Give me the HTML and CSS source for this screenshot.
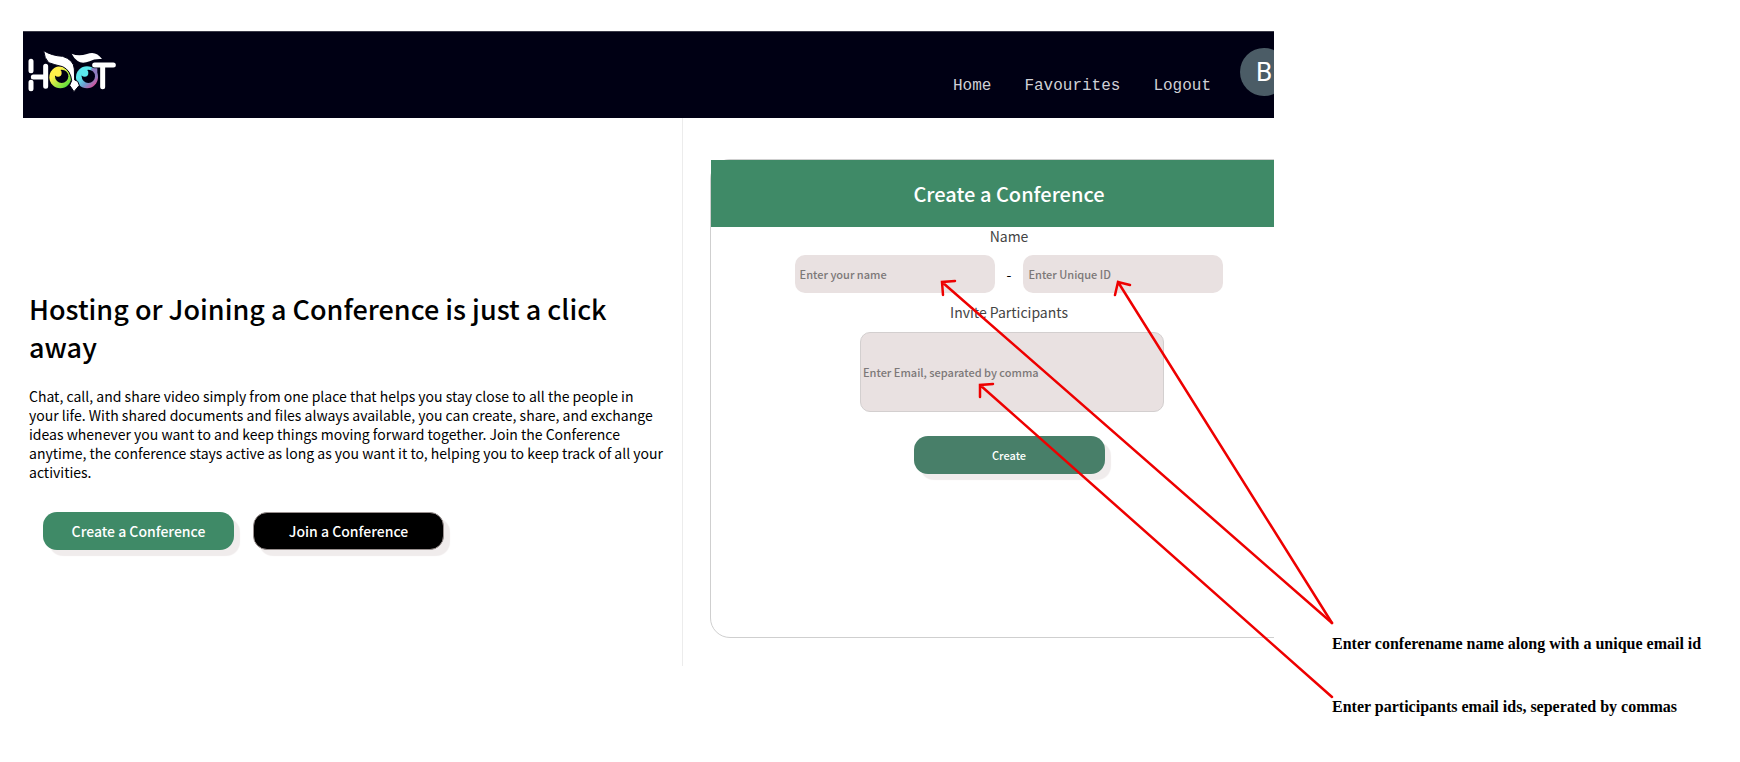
FILE: index.html
```html
<!DOCTYPE html>
<html lang="en">
<head>
<meta charset="utf-8">
<title>Hoot – Create a Conference</title>
<link rel="stylesheet" href="styles.css">
</head>
<body>
<div class="page">
  <div class="app">
    <header class="topbar">
      <svg class="logo" viewBox="51 90 270 126" role="img" aria-label="Hoot">
        <defs>
          <linearGradient id="eye-left" x1="0" y1="0" x2="1" y2="1">
            <stop offset="0.3" stop-color="#fff04a"/>
            <stop offset="0.85" stop-color="#5fe03c"/>
          </linearGradient>
          <linearGradient id="eye-right" x1="0" y1="0" x2="1" y2="1">
            <stop offset="0.35" stop-color="#5ce8ee"/>
            <stop offset="0.6" stop-color="#6a9fd0"/>
            <stop offset="0.85" stop-color="#d2509c"/>
          </linearGradient>
        </defs>
        <g fill="none" stroke="#fff" stroke-width="15" stroke-linecap="round">
          <path d="M63 124V152M63 187V206M70 171H106M107 139V199"/>
          <path d="M254 135H310M278 136V200"/>
        </g>
        <circle cx="151" cy="172" r="33" fill="url(#eye-left)"/>
        <circle cx="231" cy="172" r="33" fill="url(#eye-right)"/>
        <path d="M243 145h19v30h-11z" fill="#8f7cc0"/>
        <circle cx="155" cy="169" r="20" fill="#000014"/>
        <circle cx="235" cy="169" r="20" fill="#000014"/>
        <circle cx="144" cy="159" r="11" fill="#fff04a"/>
        <circle cx="224" cy="159" r="11" fill="#5ce8ee"/>
        <path d="M101 92Q125 107 158 109Q191 119 193 147L194 180L203 184L208 196L192 215L179 196L185 182Q182 151 158 140Q132 134 116 128Q103 115 101 92Z" fill="#fff" stroke="#000014" stroke-width="3"/>
        <path d="M185 101Q205 110 231 102Q258 91 276 117Q254 115 239 124Q216 133 203 123Q191 114 185 101Z" fill="#fff"/>
      </svg>
      <nav class="nav">
        <a href="#home">Home</a>
        <a href="#favourites">Favourites</a>
        <a href="#logout">Logout</a>
      </nav>
      <span class="avatar">B</span>
    </header>
    <main class="columns">
      <section class="intro">
        <h1>Hosting or Joining a Conference is just a click away</h1>
        <p>Chat, call, and share video simply from one place that helps you stay close to all the people in your life. With shared documents and files always available, you can create, share, and exchange ideas whenever you want to and keep things moving forward together. Join the Conference anytime, the conference stays active as long as you want it to, helping you to keep track of all your activities.</p>
        <div class="actions">
          <button class="btn btn-green" type="button">Create a Conference</button>
          <button class="btn btn-black" type="button">Join a Conference</button>
        </div>
      </section>
      <section class="panel">
        <form class="card">
          <h2>Create a Conference</h2>
          <label for="name">Name</label>
          <div class="pair">
            <input id="name" class="field" type="text" placeholder="Enter your name">
            <span>-</span>
            <input class="field" type="text" aria-label="Unique ID" placeholder="Enter Unique ID">
          </div>
          <label for="emails">Invite Participants</label>
          <input id="emails" class="field field-tall" type="text" placeholder="Enter Email, separated by comma">
          <button class="btn btn-submit" type="button">Create</button>
        </form>
      </section>
    </main>
  </div>
  <aside class="notes">
    <p>Enter conferename name along with a unique email id</p>
    <p>Enter participants email ids, seperated by commas</p>
  </aside>
  <svg class="arrows" width="1740" height="762" aria-hidden="true">
    <path d="M1332 623L942 282M955 281L942 282L943 295"/>
    <path d="M1332 623L1118 282M1130 285L1118 282L1115 295"/>
    <path d="M1332 697L980 385M993 384L980 385L980 397"/>
  </svg>
</div>
</body>
</html>
```
FILE: styles.css
```css
* { box-sizing: border-box; }

body {
  margin: 0;
  background: #fff;
  color: #000;
  font-family: "Noto Sans CJK SC", "Noto Sans", sans-serif;
}

h1, h2, p { margin: 0; }

.page {
  position: relative;
  display: grid;
  grid-template-columns: 1251fr 408fr;
  column-gap: 58px;
  padding: 31px 0 0 23px;
  overflow: hidden;
}

.app { overflow: hidden; }

.topbar {
  display: flex;
  align-items: flex-start;
  height: 87px;
  padding-left: 4px;
  background: #000014;
  border-top: 1px solid #3a3a48;
}

.logo {
  width: 90px;
  height: 42px;
  margin-top: 18px;
}

.nav {
  display: flex;
  gap: 33px;
  margin: 44px 29px 0 auto;
}

.nav a {
  color: #d0d0d6;
  font-family: "Liberation Mono", monospace;
  font-size: 16px;
  line-height: 20px;
  text-decoration: none;
}

.avatar {
  flex: none;
  width: 48px;
  height: 48px;
  margin: 16px -14px 0 0;
  border-radius: 50%;
  background: #4b5c66;
  color: #fff;
  font-family: Roboto, sans-serif;
  font-size: 26px;
  line-height: 48px;
  text-align: center;
}

.columns {
  display: grid;
  grid-template-columns: 660fr 591fr;
}

.intro {
  padding: 172px 16px 0 6px;
  border-right: 1px solid #ececec;
}

.intro h1 {
  padding-right: 24px;
  font-size: 27px;
  font-weight: 500;
  line-height: 38px;
}

.intro p {
  margin-top: 21px;
  font-size: 14px;
  line-height: 19px;
}

.actions {
  display: flex;
  gap: 19px;
  margin: 30px 0 0 14px;
}

.btn {
  width: 191px;
  height: 38px;
  padding: 0;
  border: 0;
  border-radius: 14px;
  box-shadow: 6px 6px 1px #f0ecec;
  color: #fff;
  font-family: inherit;
  font-size: 14px;
  font-weight: 500;
}

.btn-green { background: #3f8a67; }

.btn-black {
  background: #000;
  border: 1px solid #99908f;
}

.btn-submit {
  margin-top: 24px;
  background: #487f69;
  font-size: 11px;
}

.panel { padding: 41px 0 28px 27px; }

.card {
  display: flex;
  flex-direction: column;
  align-items: center;
  height: 479px;
  margin-right: -34px;
  border: 1px solid #cfcfcf;
  border-radius: 20px;
}

.card h2 {
  align-self: stretch;
  background: #3f8a67;
  color: #fff;
  font-size: 20px;
  font-weight: 500;
  line-height: 67px;
  text-align: center;
}

.card label {
  color: #444;
  font-size: 14px;
  line-height: 18px;
}

.pair {
  display: flex;
  align-items: center;
  justify-content: center;
  gap: 12px;
  margin: 10px 0;
  font-size: 14px;
}

.field {
  width: 200px;
  height: 38px;
  padding: 0 5px;
  border: 0;
  border-radius: 10px;
  background: #e9e1e1;
  font-family: inherit;
  font-size: 11px;
  font-weight: 500;
}

.field::placeholder { color: #7c7878; opacity: 1; }

.field-tall {
  width: 304px;
  height: 80px;
  margin: 11px 0 0 6px;
  padding: 0 2px;
  border: 1px solid #d3cfcf;
}

.notes {
  padding-top: 601px;
  font-family: "Liberation Serif", serif;
  font-size: 16px;
  font-weight: 700;
  line-height: 24px;
}

.notes p + p { margin-top: 39px; }

.arrows {
  position: absolute;
  top: 0;
  left: 0;
  fill: none;
  stroke: #ee0000;
  stroke-width: 2.5;
  stroke-linecap: round;
  pointer-events: none;
}
```
